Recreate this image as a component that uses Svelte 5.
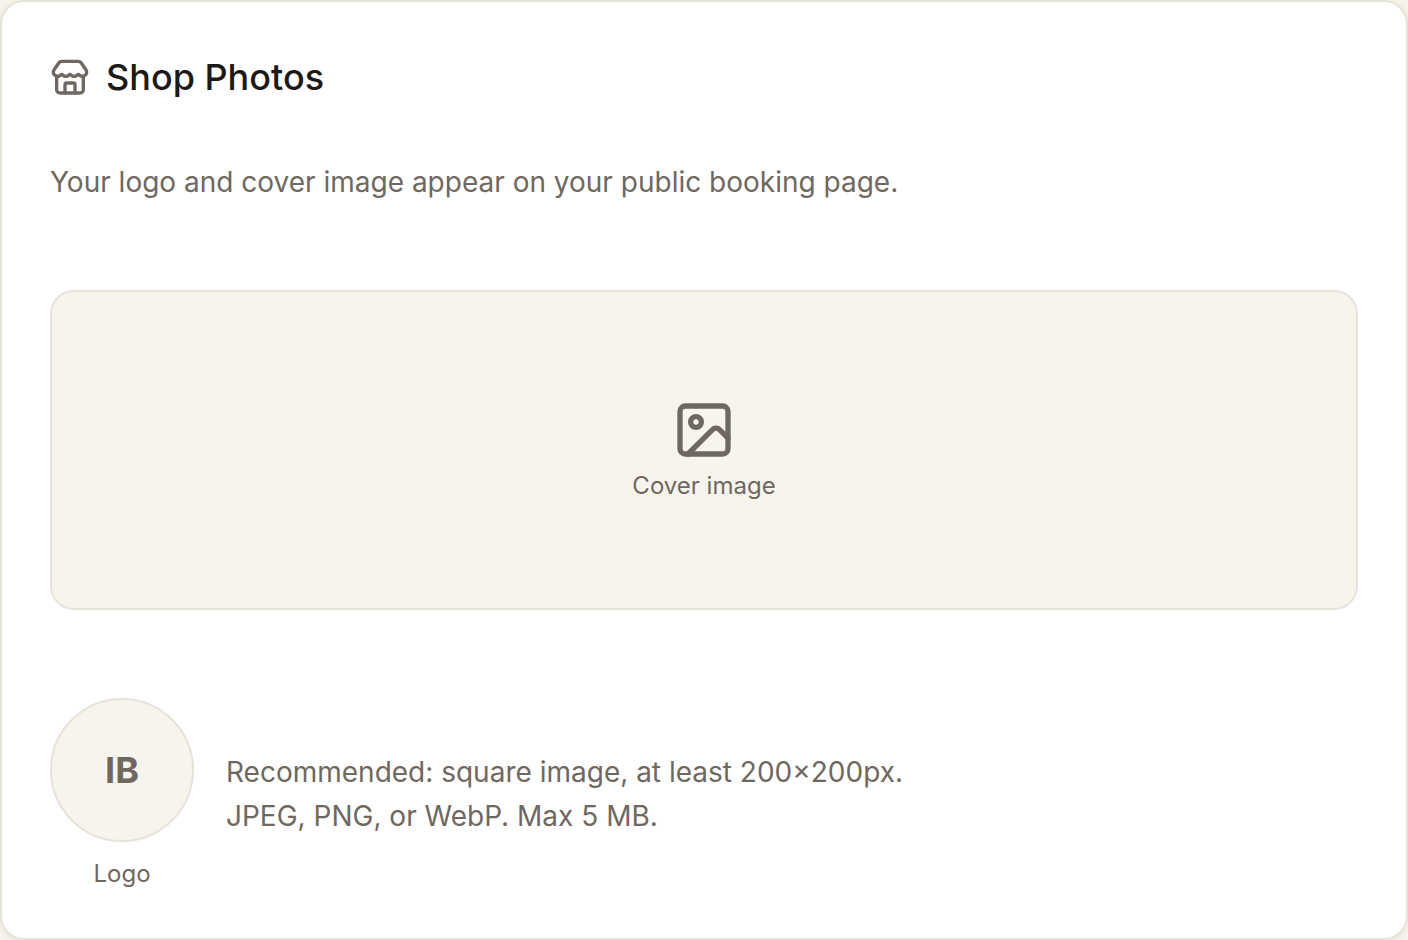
<script lang="ts">
	interface Props {
		initials?: string;
	}

	let { initials = 'IB' }: Props = $props();
</script>

<section class="card" aria-labelledby="photos-title">
	<header class="header">
		<svg class="icon" viewBox="0 0 24 24" aria-hidden="true">
			<path d="M15 21v-5a1 1 0 0 0-1-1h-4a1 1 0 0 0-1 1v5" />
			<path d="M17.774 10.31a1.12 1.12 0 0 0-1.549 0 2.5 2.5 0 0 1-3.451 0 1.12 1.12 0 0 0-1.548 0 2.5 2.5 0 0 1-3.452 0 1.12 1.12 0 0 0-1.549 0 2.5 2.5 0 0 1-3.77-3.248l2.889-4.184A2 2 0 0 1 7 2h10a2 2 0 0 1 1.653.873l2.895 4.192a2.5 2.5 0 0 1-3.774 3.244" />
			<path d="M4 10.95V19a2 2 0 0 0 2 2h12a2 2 0 0 0 2-2v-8.05" />
		</svg>
		<h2 class="title" id="photos-title">Shop Photos</h2>
	</header>

	<p class="text">Your logo and cover image appear on your public booking page.</p>

	<div class="cover">
		<svg class="icon large" viewBox="0 0 24 24" aria-hidden="true">
			<rect x="3" y="3" width="18" height="18" rx="2" />
			<circle cx="9" cy="9" r="2" />
			<path d="m21 15-3.086-3.086a2 2 0 0 0-2.828 0L6 21" />
		</svg>
		<span class="caption">Cover image</span>
	</div>

	<div class="logo-row">
		<div class="logo">
			<div class="avatar">{initials}</div>
			<span class="caption">Logo</span>
		</div>
		<p class="text">
			Recommended: square image, at least 200×200px.<br />
			JPEG, PNG, or WebP. Max 5 MB.
		</p>
	</div>
</section>

<style>
	:global(body) {
		background: #f7f4ed;
	}

	.card {
		box-sizing: border-box;
		padding: 48px;
		border: 2px solid #e7e3da;
		border-radius: 24px;
		background: #fff;
		box-shadow: 0 2px 6px rgba(28, 25, 23, 0.08);
		color: #6f6860;
		font-family: Inter, sans-serif;
	}

	.header {
		display: flex;
		align-items: center;
		gap: 16px;
		margin-bottom: 55px;
	}

	.icon {
		flex: none;
		width: 40px;
		height: 40px;
		fill: none;
		stroke: currentColor;
		stroke-width: 2;
		stroke-linecap: round;
		stroke-linejoin: round;
	}

	.icon.large {
		width: 64px;
		height: 64px;
	}

	.title {
		margin: 0;
		color: #1c1917;
		font-size: 36px;
		font-weight: 500;
		line-height: 55px;
	}

	.text {
		margin: 0;
		font-size: 28px;
		line-height: 44px;
	}

	.cover {
		box-sizing: border-box;
		display: flex;
		flex-direction: column;
		align-items: center;
		justify-content: center;
		gap: 8px;
		min-height: 320px;
		margin: 86px 0 88px;
		border: 2px solid #e7e3da;
		border-radius: 24px;
		background: #f7f4ed;
	}

	.caption {
		font-size: 24px;
		line-height: 32px;
	}

	.logo-row {
		display: flex;
		align-items: center;
		gap: 32px;
	}

	.logo {
		display: flex;
		flex-direction: column;
		align-items: center;
		gap: 16px;
	}

	.avatar {
		box-sizing: border-box;
		display: flex;
		align-items: center;
		justify-content: center;
		width: 144px;
		height: 144px;
		border: 2px solid #e7e3da;
		border-radius: 50%;
		background: #f7f4ed;
		font-size: 36px;
		font-weight: 700;
		line-height: 55px;
	}
</style>
